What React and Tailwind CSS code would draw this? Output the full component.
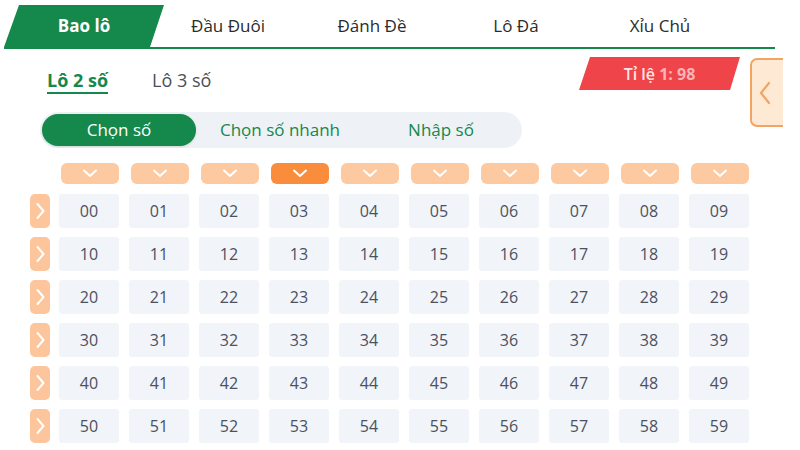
import React, { useState } from 'react';

const tabs = ['Đầu Đuôi', 'Đánh Đề', 'Lô Đá', 'Xỉu Chủ'];
const modes = ['Chọn số', 'Chọn số nhanh', 'Nhập số'];

const ChevronDown = () => (
  <svg width="16" height="9" viewBox="0 0 16 9" fill="none">
    <path d="M2 1.5l6 5.5 6-5.5" stroke="white" strokeWidth="2" strokeLinecap="round" strokeLinejoin="round" />
  </svg>
);

const ChevronRight = () => (
  <svg width="9" height="18" viewBox="0 0 9 18" fill="none">
    <path d="M1.5 2l6 7-6 7" stroke="white" strokeWidth="2" strokeLinecap="round" strokeLinejoin="round" />
  </svg>
);

const App = () => {
  const [mode, setMode] = useState(0);
  const activeCol = 3;

  return (
    <div className="relative w-[800px] h-[450px] overflow-hidden bg-white font-['Open_Sans','Noto_Sans',sans-serif]">
      {/* Top tabs */}
      <div className="ml-[4px] mt-[5px] w-[771px] h-[44px] flex border-b-2 border-[#15884b]">
        <div className="w-[160px] h-full bg-[#15884b] [clip-path:polygon(15px_0,100%_0,146px_100%,0_100%)] flex items-center justify-center text-white font-bold text-[17px]">
          Bao lô
        </div>
        {tabs.map((t, i) => (
          <div
            key={t}
            className={`w-[144px] h-full flex items-center justify-center text-[17px] text-[#2b2b2b] ${i === 0 ? '-ml-[8px]' : ''}`}
          >
            {t}
          </div>
        ))}
      </div>

      {/* Sub tabs + rate */}
      <div className="mt-[8px] flex items-start justify-between pr-[60px]">
        <div className="flex pl-[47px] pt-[11px] gap-[44px] text-[18px]">
          <div className="leading-[24px] pb-[0px] border-b-2 border-[#15884b] text-[#15884b] font-bold">Lô 2 số</div>
          <div className="leading-[24px] text-[#4b4f58]">Lô 3 số</div>
        </div>
        <div className="w-[161px] h-[33px] bg-[#ef444a] [clip-path:polygon(11px_0,100%_0,calc(100%-10px)_100%,0_100%)] flex items-center justify-center text-[16px] font-semibold">
          <span className="text-[#fde4e4]">Tỉ lệ&nbsp;</span>
          <span className="text-[#fbb4b4] font-bold">1: 98</span>
        </div>
      </div>

      {/* Side toggle */}
      <div className="absolute left-[750px] top-[58px] w-[33px] h-[69px] overflow-hidden">
        <div className="w-[44px] h-[69px] rounded-[7px] border-2 border-[#f4a462] bg-[#fee9d5] flex items-center pl-[7px]">
          <svg width="12" height="24" viewBox="0 0 12 24" fill="none">
            <path d="M10 2L2 12l8 10" stroke="#f4a462" strokeWidth="2.2" strokeLinecap="round" strokeLinejoin="round" />
          </svg>
        </div>
      </div>

      {/* Mode switch */}
      <div className="mt-[18px] ml-[40px] w-[482px] h-[36px] rounded-full bg-[#eef2f7] p-[2px] flex gap-[7px]">
        {modes.map((m, i) => (
          <button
            key={m}
            onClick={() => setMode(i)}
            className={`w-[154px] h-[32px] rounded-full text-[17px] flex items-center justify-center ${
              mode === i ? 'bg-[#15884b] text-white shadow-sm' : 'text-[#15884b]'
            }`}
          >
            {m}
          </button>
        ))}
      </div>

      {/* Number grid */}
      <div className="ml-[30px] mt-[15px]">
        <div className="flex gap-[10px] pl-[29px]">
          {Array.from({ length: 10 }).map((_, c) => (
            <div key={c} className="w-[60px]">
              <div
                className={`ml-[2px] w-[58px] h-[21px] rounded-[6px] flex items-center justify-center ${
                  c === activeCol ? 'bg-[#f98d3b]' : 'bg-[#fdc9a0]'
                }`}
              >
                <ChevronDown />
              </div>
            </div>
          ))}
        </div>

        <div className="mt-[10px] flex flex-col gap-[9px]">
          {Array.from({ length: 6 }).map((_, r) => (
            <div key={r} className="flex gap-[9px]">
              <div className="w-[20px] h-[34px] rounded-[5px] bg-[#fcc59b] flex items-center justify-center">
                <ChevronRight />
              </div>
              <div className="flex gap-[10px]">
                {Array.from({ length: 10 }).map((_, c) => (
                  <div
                    key={c}
                    className="w-[60px] h-[34px] rounded-[3px] bg-[#f1f4f9] flex items-center justify-center text-[16px] text-[#4b5160]"
                  >
                    {`${r}${c}`}
                  </div>
                ))}
              </div>
            </div>
          ))}
        </div>
      </div>
    </div>
  );
};

export default App;
